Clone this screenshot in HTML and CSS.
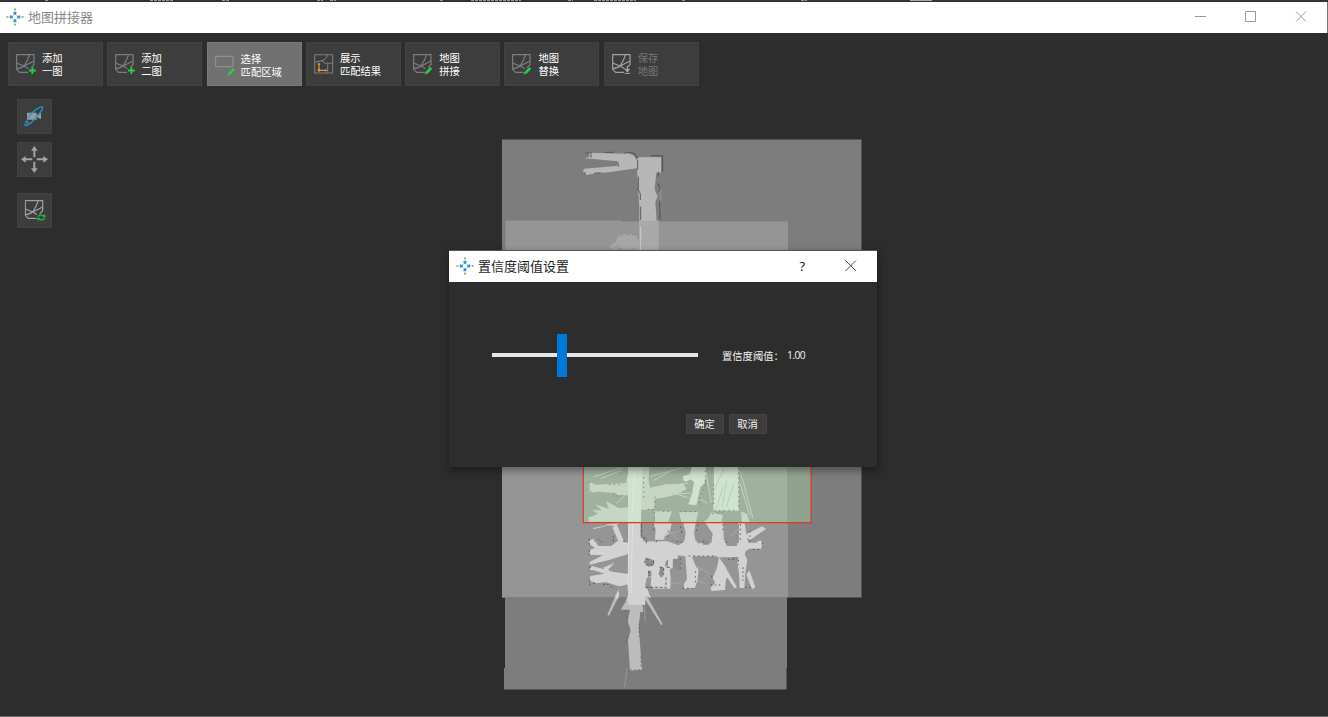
FILE: index.html
```html
<!DOCTYPE html>
<html lang="zh-CN">
<head>
<meta charset="utf-8">
<title>地图拼接器</title>
<link rel="stylesheet" href="styles.css">
</head>
<body>
<svg class="defs" width="0" height="0" aria-hidden="true">
  <defs>
    <symbol id="logo" viewBox="0 0 54 54">
      <circle cx="27" cy="27" r="8" fill="#fff" stroke="#a9c9ee" stroke-width="2.500"/>
      <g fill="#2f8fee"><path d="M22 12h10l-2 8h-6zM22 42h10l-2-8h-6zM12 22v10l8-2v-6zM42 22v10l-8-2v-6z"/></g>
      <g fill="#7cc04b"><circle cx="27" cy="3.500" r="3"/><circle cx="27" cy="9" r="2"/><circle cx="27" cy="45" r="2"/><circle cx="27" cy="50.500" r="3"/><circle cx="3.500" cy="27" r="2.700"/><circle cx="9" cy="27" r="2"/><circle cx="45" cy="27" r="2"/><circle cx="50.500" cy="27" r="2.700"/></g>
    </symbol>
    <symbol id="map" viewBox="0 0 60 60">
      <g fill="none" stroke="currentColor" stroke-width="3.600"><path d="M36 55H11L2 46V2h52v30L45 41"/><path d="M2 27l22 9L54 21M24 36C32 24 38 14 40 2M2 44c10-1 17-3 22-8l14 8"/></g>
    </symbol>
    <symbol id="pen" viewBox="0 0 24 24"><path d="M1 23l3-9L18 0l6 5L12 18z" fill="#28cf43"/></symbol>
  </defs>
</svg>
<div class="window">
  <div class="backdrop"><svg width="1328" height="2"><path d="M45 .5h4M150 .5h24M222 .5h8M317 .5h6M330 .5h6M440 .5h3M471 .5h50M568 .5h5M594 .5h42M682 .5h3M801 .5h6" stroke="#999" stroke-width="1" stroke-dasharray="3 1"/><path d="M910 .5h22" stroke="#aaa"/></svg></div>
  <header class="titlebar">
    <svg class="logo"><use href="#logo"/></svg>
    <h1 class="title">地图拼接器</h1>
    <svg class="controls" width="112" height="12" viewBox="0 0 112 12" fill="none" stroke="#999"><path d="M0 5.500h11M50.500 .5h10v10h-10zM101 .5l10 10M111 .5l-10 10"/></svg>
  </header>
  <main class="workspace">
    <svg class="canvas" viewBox="0 33 1328 684" width="1328" height="684">
      <rect x="502" y="139.500" width="359.500" height="458" fill="#7d7d7d"/>
      <path d="M505 597.500H787V668h-.5v21.500H504V668h1z" fill="#7d7d7d"/>
      <path d="M505.500 220.500H622v1H788V597.500H502V450h3.500z" fill="#959595"/>
      <g transform="translate(495 130) scale(.33333)">
        <path d="M270 85l14-5-3-12 52 2 55 1 10-3 19 9 8 12 7-7h66v46h-14l-5 50 9 22-7 15 5 72v76h-53V235l-7-120-80 11-40 4-33 5-9-10 3-9 97-8 9-8-6-6z" fill="#b7b7b7"/>
        <path d="M436 272h55v88h-55z" fill="#a9a9a9"/>
        <path d="M340 350l21-13 8-19 21-7 8 6 10-6 16 5 5 14 12-2 4 32h-21l-7-5-23 5-17-7-16 7z" fill="#a6a6a6"/>
        <path d="M272 69h18M328 67h27M388 69l18-1 14 3 6 15M288 71v12M370 103v7M297 130l20-2M270 126v8M428 90v30M430 140v42M432 182l4 10v18M437 230v40M467 77h36v47M490 125v15M488 160l8 17-5 8M494 210l1 58" stroke="#494949" stroke-width="2.500" fill="none"/>
        <path d="M359 352l15-6M378 319l6-3M410 313l14 2" stroke="#888" stroke-width="2"/>
        <path d="M493 178l7 3-6 10 5 13-4 10" stroke="#aaa" stroke-width="2" fill="none"/>
        <path d="M437 290v70" stroke="#ddd" stroke-width="2"/>
      </g>
      <g transform="translate(495 460) scale(.33333)">
        <path d="M398 405h42l5 51h-9l-5 45 10 128-36 3-6-92 8-29-9-28 7-34h-28l14-22zM439 397l12 3 52 92-4 4-46-73zM365 398l10 4-33 65-5-3z" fill="#bcbcbc"/>
        <path d="M396 625l-7 56M447 415l4 70" stroke="#999" stroke-width="3"/>
        <path d="M388 454h10M396 470v25M433 490v40M397 530l-6 15M438 590v30M405 630h30" stroke="#606060" stroke-width="2.500" stroke-dasharray="5 7"/>
      </g>
      <g transform="translate(583 464) scale(.33333)">
        <g fill="#d2d2d2">
          <path d="M135 170H173v50l16 12h64l34 12 17-13 4-24-9-37h40l-6 36 10 32 42 0 4-29-26-39h58l1 54 10 22h30l3-76h19l7 46 5 20h24l6-6h10v24h-35l-12 6-4 10 8 18-6 40-3 44h-14l-2-42-5-38v-12H408l18 26 12 30-9 10-3 32-40 3-4-10 14-14-7-16 11-24 8-34-6-6h-72l-3 3 13 30 7 6-4 35-7 20-32 3-2-13 10-16-3-42-2-26-22-3-2 18-8 16-15 8 3 26-1 32h-52l-7-10 2-26-14 4-4 20v60H135z"/>
          <path d="M137 236L104 231 84 246 45 246 35 225 18 228v11l18 13-16 6v14l40 2-40 20v8l60-15 56-17zM137 330l-45-6-65-18-6 9 44 14-43 7-3 14 23 8 25-4 29 9 31 8 10 15-4 24h44zM211 178h55l-6 27-15 22h-29l2-31z"/>
          <path d="M484 214l53-27 12 8-48 33zM422 300l40 70-8 3-38-58zM499 319l18 51-10 6-17-44zM64 182l46-5-16 9zM28 192l64-11-58 14zM88 190l14-8 24 55-20-6zM136 290l-66 27-10-6 70-30zM20 312l58 4v5l-57-3zM96 400l14-33 8 5-14 34zM178 370l14 3 12 30-18-8z"/>
        </g>
        <path d="M102 180h32v49H122zM36 203l52-15-3 31-34 7zM108 281h27v35H77zM104 369l30-8v37h-24zM210 215l-22-8 28 25H180v-12h-7v-40h38zM258 206l20-14-12-14h22l6 37-14-10zM245 216l14-4 28 22-6 8-19-17-18 2zM334 210l18-20 16-8 8 25 8 22h-47zM433 180h35v57h-35l-11-25z" fill="#959595"/>
        <path d="M188 283l15 2 10 5v14l-17 4-6-8-8-4zM197 320l8 0v17h-10zM232 310l9 0v25l-7 6-7-12zM248 294l8-9-2 23-8-2zM270 284h21v36l-16-6-6-4zM360 230h18v12h-18zM446 279h20v12l-15-3z" fill="#8d8d8d"/>
        <g fill="none" stroke="#505050" stroke-width="2.500">
          <path d="M19 225v18M19 258v16M36 227v8M20 307v13M20 347v18M30 358h10M60 361h18M82 366l12 7M45 225l14 12M91 215v20M120 232h8" stroke-dasharray="6 5"/>
          <path d="M176 180v37M180 220l9 4M190 228v10" stroke-dasharray="12 3"/>
          <path d="M188 285h15M212 289v12M188 303h20M197 320v18M230 310h12v22M188 370h58M249 340v35M251 310h9" stroke-dasharray="9 5"/>
          <path d="M212 145v20M211 180v25M220 230v8M256 200v18M280 232l22 4M289 174l8 35M317 276h84M292 282v36M337 322v35M298 373h30M345 182l-6 25M360 230v14M420 180v20M430 237v-15M472 180v50M501 200v35M539 235v16M510 256h20" stroke-dasharray="5 9"/>
          <path d="M386 335v10M383 363h30M435 286h18M466 288v15M480 310v40M487 370h24" stroke-dasharray="5 7"/>
        </g>
        <path d="M250 195l36 34M245 212l45-10M340 307l44 24M260 355l30 5M342 350l25 8M444 217l26-28" stroke="#b2b2b2" stroke-width="2"/>
      </g>
      <g transform="translate(583 464) scale(.33333)">
        <path d="M1 9H684V176H1z" fill="#a0b29d"/>
        <path d="M612 9h72v167h-72z" fill="#91a28f"/>
        <path d="M19 54l20 8 90-5 10-48h60l-2 40 4 22 48-10 52-2 10 16-25 14-33 10-38 6v30l-50 4v34H17l-1-12 29-12-18-10 29 0-20-19 41 15-8-24 38 21 34-3V93H104l-8-6-50-4-26 4zM214 142h53l-12 34h-38zM288 144h58l-8 32h-42zM358 176l16-12 12-20 34 10-5 22zM474 142l18 8 9 26h-24z" fill="#c6d6c3"/>
        <path d="M135 9h44l-3 60-2 107h-39zM326 9h42l2 24-6 25-12 12-12 54-24-3 12-36 5-30-15-14zM301 36l26-8 4 14-22 11-12-6zM393 9h74v131h-76z" fill="#cfe4ce"/>
        <path d="M32 38l85-27M53 44l60-24M202 37l99-26M212 50l50-28M225 70l90-13M239 93l85-6M250 82l70 20M100 118l34-30M369 24l16 92M472 22l38 142M470 55l31 100M350 105l22 12M490 176l30 0" stroke="#c3d4c0" stroke-width="3"/>
        <path d="M424 10l-29 65M417 130l14-80M430 130l22-71M400 134l20-66" stroke="#abc2a9" stroke-width="2"/>
        <path d="M19 53v6M24 82v6M78 62h38M92 88v8h22M182 40v65M216 98v38h-30M299 42l5 14M367 20v48l-16 28-2 24M392 60v60M467 12v125M394 139h70M214 145v20M240 142h24M292 143h50M388 149l32-5" stroke="#647c64" stroke-width="2.500" stroke-dasharray="4 10" fill="none"/>
        <path d="M139 178l-4 190M149 178l-5 210M155 20l-8 130" stroke="#e7e7e7" stroke-width="2"/>
        <path d="M1 8V176H684V8" fill="none" stroke="#df3830" stroke-width="3.500"/>
      </g>
      <path d="M0 716.500h1328" stroke="#666"/>
    </svg>
    <nav class="toolbar">
      <button class="tool"><svg class="icon" viewBox="0 0 60 60"><use href="#map"/><path d="M47 38v21M36.500 48.500h21" stroke="#3d3d3d" stroke-width="9"/><path d="M49 39v21M38.500 49.500h21" stroke="#28cf43" stroke-width="5.500"/></svg><span>添加<br>一图</span></button>
      <button class="tool"><svg class="icon" viewBox="0 0 60 60"><use href="#map"/><path d="M47 38v21M36.500 48.500h21" stroke="#3d3d3d" stroke-width="9"/><path d="M49 39v21M38.500 49.500h21" stroke="#28cf43" stroke-width="5.500"/></svg><span>添加<br>二图</span></button>
      <button class="tool active"><svg class="icon" viewBox="0 0 60 60"><path d="M2 7h52v31H2z" fill="none" stroke="#92959a" stroke-width="3"/><use href="#pen" x="36" y="42" width="24" height="24"/></svg><span>选择<br>匹配区域</span></button>
      <button class="tool"><svg class="icon" viewBox="0 0 60 60"><path d="M2 2h54v55H2zM2 25l22-5 9 8h23M24 20C34 17 38 11 41 2M41 28v29" fill="none" stroke="currentColor" stroke-width="3.200"/><path d="M15 29v20h22" fill="none" stroke="#e79b2c" stroke-width="3.500"/><path d="M15 25l-4 7h8zM40 49l-6-4v8z" fill="#e79b2c"/><circle cx="15" cy="49" r="4" fill="#e79b2c"/></svg><span>展示<br>匹配结果</span></button>
      <button class="tool"><svg class="icon" viewBox="0 0 60 60"><use href="#map"/><use href="#pen" x="34" y="39" width="24" height="24"/></svg><span>地图<br>拼接</span></button>
      <button class="tool"><svg class="icon" viewBox="0 0 60 60"><use href="#map"/><use href="#pen" x="34" y="39" width="24" height="24"/></svg><span>地图<br>替换</span></button>
      <button class="tool disabled"><svg class="icon" viewBox="0 0 60 60"><use href="#map"/><path d="M46 36v12M39 46h14l-7 8zM38 58h16" stroke="#aaa" stroke-width="3" fill="#aaa"/></svg><span>保存<br>地图</span></button>
    </nav>
    <aside class="side">
      <button class="square"><svg width="21" height="21" viewBox="0 0 63 63"><path d="M9 20h29v8l13-7v19l-13-7v8H9z" fill="#999ba0"/><path d="M4 51C-2 67 18 56 34 38S59 6 55 3C48-1 25 17 12 35" fill="none" stroke="#2497c9" stroke-width="4"/><path d="M2 44h11v13z" fill="#2497c9"/></svg></button>
      <button class="square"><svg width="27" height="27" viewBox="0 0 81 81"><path d="M40 12v22M40 47v22M12 40h22M47 40h22" stroke="#a2a3a5" stroke-width="6"/><path d="M40 0l10 14H30zM40 81l10-14H30zM0 40l14-10v20zM81 40L67 30v20z" fill="#a2a3a5"/></svg></button>
      <button class="square reload"><svg width="21" height="21" viewBox="0 0 63 63"><use href="#map" x="2" width="60" height="60"/><path d="M40 42h25v21H40z" fill="#3d3d3d"/><path d="M42 50c4-7 13-7 18-2M63 53c-4 8-14 8-19 4" fill="none" stroke="#28b943" stroke-width="3.500"/><path d="M64 42v10H54zM40 63V53h10z" fill="#28b943"/></svg></button>
    </aside>
    <section class="dialog" role="dialog">
      <header class="dialog-head">
        <svg class="logo"><use href="#logo"/></svg>
        <h2 class="dialog-title">置信度阈值设置</h2>
        <span class="help">?</span>
        <svg width="12" height="12" viewBox="0 0 12 12" stroke="#444"><path d="M.5.5l10.500 10.500M11 .5L.5 11"/></svg>
      </header>
      <div class="setting">
        <div class="slider"><div class="thumb"></div></div>
        <label class="label">置信度阈值：</label><output class="value">1.00</output>
      </div>
      <footer class="actions"><button class="action">确定</button><button class="action">取消</button></footer>
    </section>
  </main>
</div>
</body>
</html>
```

FILE: styles.css
```css
* { box-sizing: border-box; }
body { margin: 0; background: #2d2d2d; font-family: "Noto Sans CJK SC", sans-serif; overflow: hidden; }
button { border: 0; padding: 0; font: inherit; color: #f0f0f0; background: #3d3d3d; }
.defs { position: absolute; }
.window { display: flex; flex-direction: column; width: 1328px; height: 717px; }
.backdrop { height: 2px; background: #333; display: flex; }
.titlebar { height: 31px; background: #fff; display: flex; align-items: center; padding: 0 20px 1px 6px; border-right: 1px solid #777; }
.logo { width: 18px; height: 18px; flex: none; }
.title { margin: 0 0 0 4px; font-size: 13px; font-weight: 400; line-height: 18px; color: #888; flex: 1; }
.workspace { position: relative; flex: 1; }
.canvas { position: absolute; left: 0; top: 0; }
.toolbar { position: relative; display: flex; gap: 4.300px; padding: 9px 8px 0; }
.tool { width: 95px; height: 44px; display: flex; align-items: center; gap: 6px; padding-left: 7px; font-size: 10.300px; line-height: 13px; text-align: left; color: #fff; border: 1px solid #424242; }
.tool span { white-space: nowrap; }
.icon { width: 20px; height: 20px; color: #797d82; overflow: visible; }
.tool.active { background: #717171; border-color: #7a7a7a; }
.tool.active span { padding-top: 1px; }
.tool.disabled { color: #777; }
.disabled .icon { color: #a0a0a0; }
.side { position: relative; width: 52px; display: flex; flex-direction: column; gap: 8px; padding: 13px 0 0 17px; }
.square { width: 35px; height: 35px; display: flex; align-items: center; justify-content: center; border: 1px solid #424242; color: #a0a0a0; padding-bottom: 1px; }
.square.reload { margin-top: 8px; }
.square svg { overflow: visible; }
.dialog { position: absolute; left: 449px; top: 217px; width: 428px; height: 217px; background: #2d2d2d; box-shadow: 1px 3px 7px 1px rgba(0,0,0,.35); }
.dialog-head { height: 32px; background: #fff; display: flex; align-items: center; padding: 0 20px 2px 7px; border-top: 1px solid #555; }
.dialog-title { margin: 0 0 0 4px; flex: 1; font-size: 13px; font-weight: 400; line-height: 18px; color: #1c1c1c; }
.help { font: 13px "Open Sans", sans-serif; color: #111; margin-right: 40px; }
.setting { display: flex; align-items: center; height: 44px; margin: 51px 43px 0; font-size: 10.300px; color: #f4f4f4; }
.slider { width: 206px; height: 4px; background: #e6e6e6; display: flex; align-items: center; padding-left: 65px; }
.thumb { width: 10px; height: 43px; background: #0078d7; flex: none; }
.label { margin-left: 24px; width: 65px; white-space: nowrap; }
.value { font-family: "Open Sans", sans-serif; font-size: 10.300px; letter-spacing: -.6px; }
.actions { display: flex; gap: 5px; padding: 37px 0 0 237px; }
.action { width: 38px; height: 20px; font-size: 10.300px; line-height: 18px; border: 1px solid #444; padding-right: 1px; }
```
